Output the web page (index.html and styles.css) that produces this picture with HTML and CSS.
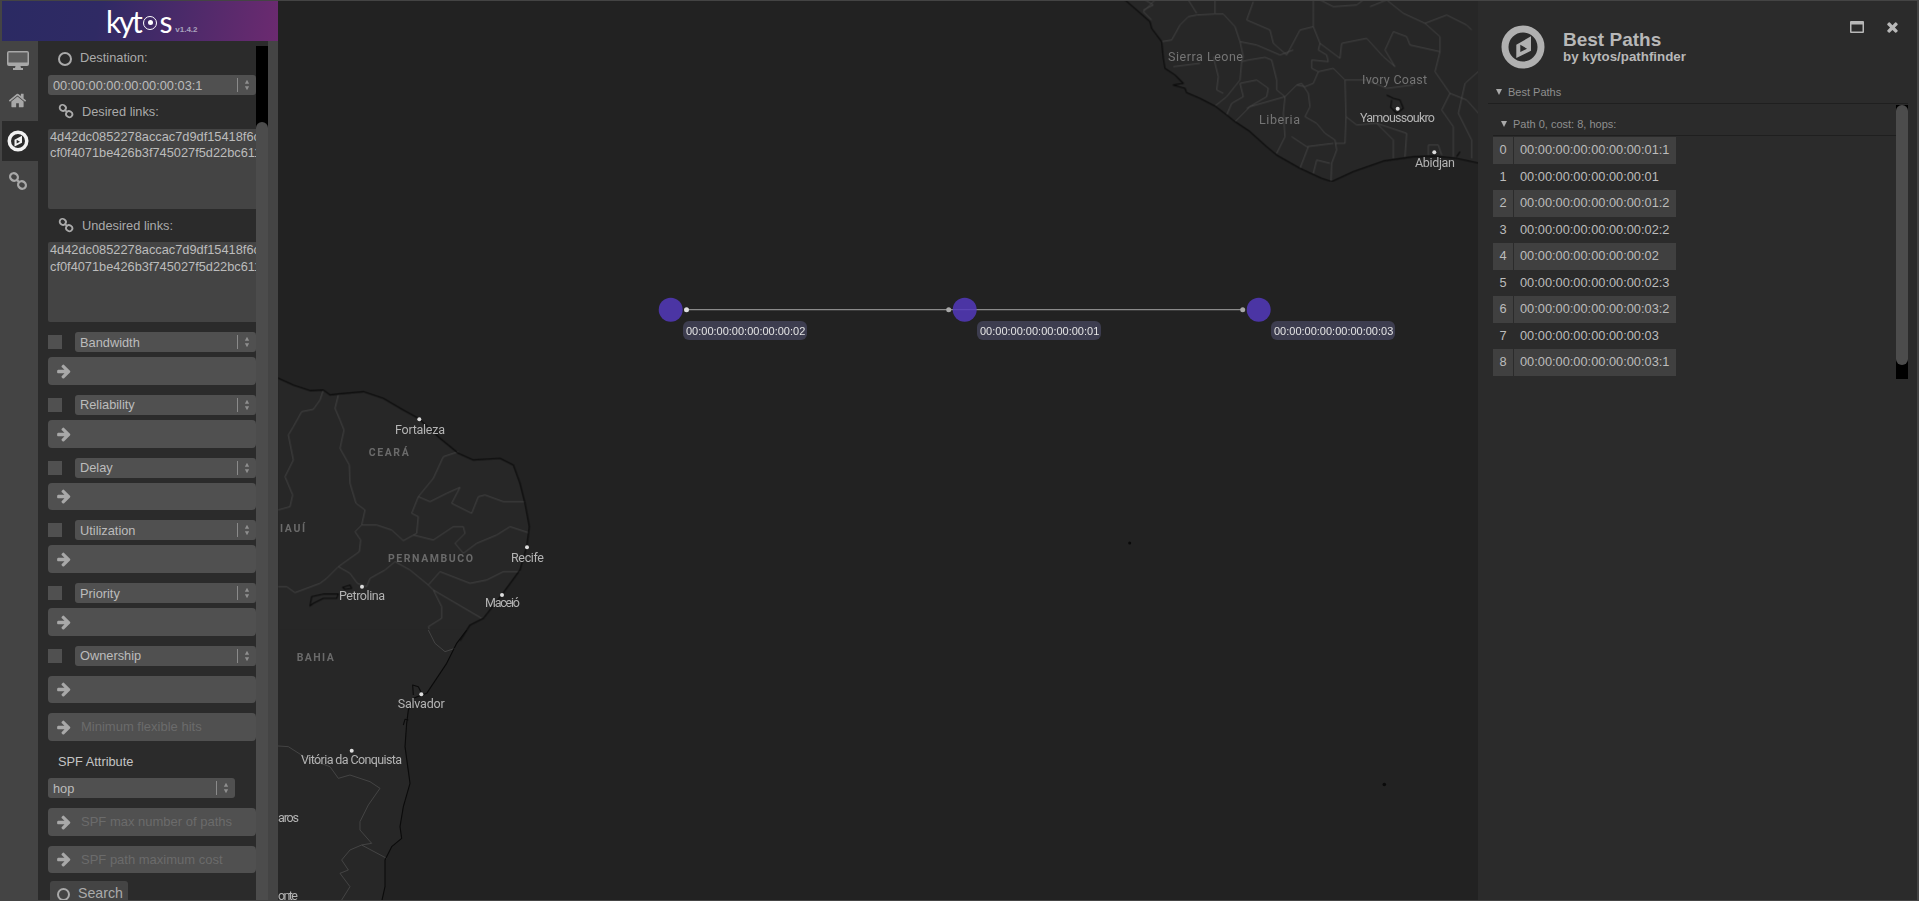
FILE: index.html
```html
<!DOCTYPE html>
<html lang="en">
<head>
<meta charset="utf-8">
<title>Kytos</title>
<link rel="stylesheet" href="styles.css">
</head>
<body>
<svg class="defs" width="0" height="0" aria-hidden="true">
  <symbol id="i-arrow" viewBox="0 0 1792 1792"><path d="M1600 960q0 54-37 91l-651 651q-39 37-91 37-51 0-90-37l-75-75q-38-38-38-91t38-91l293-293h-704q-52 0-84.5-37.5t-32.5-90.5v-128q0-53 32.5-90.5t84.5-37.5h704l-293-294q-38-36-38-90t38-90l75-75q38-38 90-38 53 0 91 38l651 651q37 35 37 90z"/></symbol>
  <symbol id="i-link" viewBox="0 0 20 20"><g fill="none" stroke="currentColor" stroke-width="2.3"><ellipse cx="6" cy="6" rx="4" ry="3.6" transform="rotate(35 6 6)"/><ellipse cx="14" cy="14" rx="4" ry="3.6" transform="rotate(35 14 14)"/><path d="M8.5 8.5l3 3"/></g></symbol>
  <symbol id="i-updown" viewBox="0 0 7 14"><path d="M3.5 1L6 5.5H1zM3.5 13L1 8.500H6z"/></symbol>
</svg>
<div class="app">
  <aside class="left">
    <header class="brand">
      <span class="logo">kyt<span class="logo-o"><span class="logo-dot"></span></span>s</span>
      <span class="version">v1.4.2</span>
    </header>
    <div class="left-body">
      <nav class="rail">
        <a class="rail-item">
          <svg class="ic-desktop" viewBox="0 0 22 19"><path class="fg" d="M2 0h18a2 2 0 0 1 2 2v11a2 2 0 0 1-2 2h-6.500l.5 2h2v2H6v-2h2l.5-2H2a2 2 0 0 1-2-2V2a2 2 0 0 1 2-2z"/><rect class="screen" x="1.500" y="1.500" width="19" height="10"/></svg>
        </a>
        <a class="rail-item">
          <svg class="ic-home" viewBox="0 0 1792 1792"><path d="M1472 992v480q0 26-19 45t-45 19h-384v-384h-256v384h-384q-26 0-45-19t-19-45v-480q0-1 .5-3t.5-3l575-474 575 474q1 2 1 6zm223-69l-62 74q-8 9-21 11h-3q-13 0-21-7l-692-577-692 577q-12 8-24 7-13-2-21-11l-62-74q-8-10-7-23.500t11-21.500l719-599q32-26 76-26t76 26l244 204v-195q0-14 9-23t23-9h192q14 0 23 9t9 23v408l219 182q10 8 11 21.500t-7 23.500z"/></svg>
        </a>
        <a class="rail-item active">
          <svg class="ic-compass-sm" viewBox="-22 -22 44 44"><circle r="17.500" fill="none" stroke="currentColor" stroke-width="7"/><path fill-rule="evenodd" d="M-7-2.500V11L8 3.700V-10.700zM-2.700-2.300V5L4 1.700z"/></svg>
        </a>
        <a class="rail-item"><svg class="ic-link-rail"><use href="#i-link"/></svg></a>
      </nav>
      <div class="form-area">
        <form class="form">
          <div class="label-row dest"><span class="ring"></span><span>Destination:</span></div>
          <div class="sel sel-dest"><span class="sel-text">00:00:00:00:00:00:00:03:1</span><span class="sel-div"></span><svg class="sel-arrows"><use href="#i-updown"/></svg></div>

          <div class="label-row link-label"><svg class="ic-link"><use href="#i-link"/></svg><span>Desired links:</span></div>
          <div class="area"><div>4d42dc0852278accac7d9df15418f6c8</div><div>cf0f4071be426b3f745027f5d22bc611</div></div>

          <div class="label-row link-label"><svg class="ic-link"><use href="#i-link"/></svg><span>Undesired links:</span></div>
          <div class="area area-loose"><div>4d42dc0852278accac7d9df15418f6c8</div><div>cf0f4071be426b3f745027f5d22bc611</div></div>

          <div class="filter first"><span class="check"></span><div class="sel"><span class="sel-text">Bandwidth</span><span class="sel-div"></span><svg class="sel-arrows"><use href="#i-updown"/></svg></div></div>
          <div class="inp"><svg class="ic-arrow"><use href="#i-arrow"/></svg></div>
          <div class="filter"><span class="check"></span><div class="sel"><span class="sel-text">Reliability</span><span class="sel-div"></span><svg class="sel-arrows"><use href="#i-updown"/></svg></div></div>
          <div class="inp"><svg class="ic-arrow"><use href="#i-arrow"/></svg></div>
          <div class="filter"><span class="check"></span><div class="sel"><span class="sel-text">Delay</span><span class="sel-div"></span><svg class="sel-arrows"><use href="#i-updown"/></svg></div></div>
          <div class="inp"><svg class="ic-arrow"><use href="#i-arrow"/></svg></div>
          <div class="filter"><span class="check"></span><div class="sel"><span class="sel-text">Utilization</span><span class="sel-div"></span><svg class="sel-arrows"><use href="#i-updown"/></svg></div></div>
          <div class="inp"><svg class="ic-arrow"><use href="#i-arrow"/></svg></div>
          <div class="filter"><span class="check"></span><div class="sel"><span class="sel-text">Priority</span><span class="sel-div"></span><svg class="sel-arrows"><use href="#i-updown"/></svg></div></div>
          <div class="inp"><svg class="ic-arrow"><use href="#i-arrow"/></svg></div>
          <div class="filter"><span class="check"></span><div class="sel"><span class="sel-text">Ownership</span><span class="sel-div"></span><svg class="sel-arrows"><use href="#i-updown"/></svg></div></div>
          <div class="inp inp-spaced"><svg class="ic-arrow"><use href="#i-arrow"/></svg></div>
          <div class="inp inp-spaced"><svg class="ic-arrow"><use href="#i-arrow"/></svg><span class="ph">Minimum flexible hits</span></div>

          <div class="spf-label">SPF Attribute</div>
          <div class="sel sel-hop"><span class="sel-text">hop</span><span class="sel-div"></span><svg class="sel-arrows"><use href="#i-updown"/></svg></div>
          <div class="inp inp-spaced"><svg class="ic-arrow"><use href="#i-arrow"/></svg><span class="ph">SPF max number of paths</span></div>
          <div class="inp inp-spaced"><svg class="ic-arrow"><use href="#i-arrow"/></svg><span class="ph">SPF path maximum cost</span></div>
          <div class="search"><span class="search-ic"></span><span>Search</span></div>
        </form>
        <div class="vscroll vscroll-left"><div class="vthumb"></div></div>
      </div>
      <div class="strip"></div>
    </div>
  </aside>

  <main class="map">
    <svg class="map-svg" viewBox="278 1 1200 899" width="1200" height="899">
      <g class="basemap">
      <g transform="translate(1100 0) scale(.33333)">
        <path class="land" d="M75 0L110 30L150 65L155 85L185 125L190 175L195 205L225 225L250 250L220 255L255 265L260 278L300 295L345 318L380 345L405 365L450 395L500 440L530 465L600 505L665 535L695 545L760 515L850 483L940 470L1000 468L1070 475L1140 490V0Z"/>
        <path class="border" d="M130 30L160 15L135 0M165 0L130 35L155 60M185 125L215 120L240 75L265 50L290 45L345 42L370 42L405 80L420 125L430 170L425 185L445 180L495 172L515 180L530 240L530 270L555 290L590 255L605 250L625 280L630 320L615 350L650 370L675 400L705 420L710 450L695 490L693 545"/>
        <path class="border" d="M345 318L380 290L420 240L425 185M265 0L290 40M345 0L345 40M640 0L640 40L640 80L660 130L655 150L680 165L685 185L635 180L635 205L655 215L640 250L615 260L590 255M460 5L440 60L510 90L520 130L560 165L600 90L640 80"/>
        <path class="border" d="M420 125L470 135L540 165L580 150M655 215L700 205L735 240L738 350L735 430L705 430M735 240L800 240L860 265L940 255M660 130L720 175L725 130L800 115L850 170L885 200L855 150L880 95L920 110L930 135L1020 155L1005 215L1050 280L1100 300L1140 345M1020 155L1020 110L975 70L1040 45L1100 75L1115 90M1050 280L1025 330L1060 380L1060 470M1140 210L1095 250L1075 340L1115 420L1115 475M738 350L770 375L830 370L880 420L880 475M830 370L920 400L915 470"/>
        <path class="border" d="M380 345L395 310L430 290L420 250L470 240L505 265L500 290L440 325M405 365L450 320L555 290L550 340L555 410L530 460M575 410L620 440L700 430M625 440L600 505M640 520L650 480L690 490M660 0L700 20L770 15L790 0M810 20L860 0L910 40L975 70M340 170L355 230L350 270L370 280M220 200L300 190"/>
        <path class="coast" d="M75 0L110 30L150 65L155 85L185 125L190 175L195 205L225 225L250 250L220 255L255 265L260 278L300 295L345 318L380 345L405 365L450 395L500 440L530 465L600 505L665 535L695 545L760 515L850 483L940 470L1000 468L1070 475L1140 490"/>
        <path class="coast" d="M860 285L880 295L900 300L910 325L890 340L872 322L875 300M1070 470L1080 455"/>
        <path class="border" d="M985 465L985 435L1015 435L1025 465"/>
      </g>
      <g transform="translate(270 370) scale(.33333)">
        <path class="land" d="M24 24L70 45L120 62L160 60L180 75L205 72L280 65L340 85L400 120L445 145L510 205L565 250L610 270L690 265L730 285L750 340L765 400L778 470L770 530L750 600L695 675L640 745L600 765L570 812H24Z"/>
        <path class="border" d="M160 60L150 90L130 118L95 125L70 170L55 195L70 270L45 320L68 375L60 410L24 420M205 75L195 115L210 150L222 180L210 235L238 285L240 340L258 400L285 420L275 465L255 485L272 510L268 545L205 590L170 625L150 640L75 668L50 650L24 650"/>
        <path class="border" d="M275 465L320 465L365 480L400 512L440 490L445 440L425 430L445 380L490 325L520 260L565 245M445 380L480 395L530 370L570 352L545 400L605 430L625 380L645 375L700 395L765 395M430 495L490 510L550 470L580 470L585 490L555 520L580 550L620 520L680 495L720 470L775 488"/>
        <path class="border" d="M205 590L240 610L262 640L290 650L300 625L345 600L375 575L420 600L475 645L510 605L600 640L650 630L700 605L750 605M475 645L490 660L635 745M490 660L515 710L515 745L475 770L490 810"/>
        <path class="coast" d="M24 24L70 45L120 62L160 60L180 75L205 72L280 65L340 85L400 120L445 145L510 205L565 250L610 270L690 265L730 285L750 340L765 400L778 470L770 530L750 600L695 675L640 745L600 765L570 812"/>
        <path class="coast" d="M120 708L125 680L160 672L205 672L200 685L160 685L130 700ZM218 652L240 645L245 655L225 658Z"/>
      </g>
      <g transform="translate(270 630) scale(.33333)">
        <path class="land" d="M590 -2L560 40L530 100L470 190L430 205L415 240L410 280L405 350L420 460L400 530L390 590L395 625L365 650L345 690L345 770L335 815H24V-2Z"/>
        <path class="border" d="M475 0L495 40L525 65L555 55M24 348L55 350L110 385L180 410L205 445L240 435L300 455L330 475L295 525L270 575L270 600L305 640L275 645L240 660L215 690L235 720L210 730L240 770L215 810M275 645L350 685"/>
        <path class="coast" d="M590 0L560 40L530 100L470 190L430 205L415 240L410 280L405 350L420 460L400 530L390 590L395 625L365 650L345 690L345 770L335 815M430 195L428 165L445 170L455 190M400 285L405 268L415 270"/>
      </g>

      <circle class="city" cx="1397.700" cy="108.700" r="2"/>
      <circle class="city" cx="1434.300" cy="152.300" r="2"/>
      <circle class="city" cx="419.300" cy="419.300" r="2"/>
      <circle class="city" cx="527" cy="547.300" r="2"/>
      <circle class="city" cx="362" cy="586.700" r="2"/>
      <circle class="city" cx="502" cy="595" r="2"/>
      <circle class="city" cx="421.300" cy="694.300" r="2"/>
      <circle class="city" cx="351.700" cy="750.700" r="2"/>
      <circle class="speck" cx="1129.700" cy="543" r="1.500"/>
      <circle class="speck" cx="1384.300" cy="784.500" r="1.800"/>

      <text class="m-country" x="1168" y="61" textLength="75">Sierra Leone</text>
      <text class="m-country" x="1259" y="124" textLength="41">Liberia</text>
      <text class="m-country" x="1362" y="84" textLength="65">Ivory Coast</text>
      <text class="m-city" x="1360" y="121.500" textLength="75">Yamoussoukro</text>
      <text class="m-city" x="1415" y="167" textLength="40">Abidjan</text>
      <text class="m-city" x="395" y="433.500" textLength="50">Fortaleza</text>
      <text class="m-state" x="368.700" y="455.500" textLength="40">CEARÁ</text>
      <text class="m-state" x="280" y="532" textLength="25">IAUÍ</text>
      <text class="m-state" x="388" y="562" textLength="85">PERNAMBUCO</text>
      <text class="m-city" x="511" y="561.500" textLength="33">Recife</text>
      <text class="m-city" x="339" y="600" textLength="46">Petrolina</text>
      <text class="m-city" x="485" y="607" textLength="35">Maceió</text>
      <text class="m-state" x="296.700" y="661" textLength="37">BAHIA</text>
      <text class="m-city" x="397.700" y="708" textLength="47">Salvador</text>
      <text class="m-city" x="301" y="764" textLength="101">Vitória da Conquista</text>
      <text class="m-city" x="278" y="821.500" textLength="21">aros</text>
      <text class="m-city" x="278" y="900" textLength="20">onte</text>
      </g>

      <line class="t-link" x1="686.500" y1="309.700" x2="1242.700" y2="309.700"/>
      <circle class="t-node" cx="670.700" cy="309.700" r="12"/>
      <circle class="t-node" cx="964.700" cy="309.700" r="12"/>
      <circle class="t-node" cx="1258.700" cy="309.700" r="12"/>
      <circle class="t-dot-a" cx="686.500" cy="309.700" r="2.500"/>
      <circle class="t-dot-b" cx="948.700" cy="309.700" r="2.500"/>
      <circle class="t-dot-b" cx="1242.700" cy="309.700" r="2.500"/>
      <rect class="t-tag" x="683" y="321" width="124" height="19" rx="6"/>
      <rect class="t-tag" x="977" y="321" width="124" height="19" rx="6"/>
      <rect class="t-tag" x="1271" y="321" width="124" height="19" rx="6"/>
      <text class="t-label" x="686" y="335">00:00:00:00:00:00:00:02</text>
      <text class="t-label" x="980" y="335">00:00:00:00:00:00:00:01</text>
      <text class="t-label" x="1274" y="335">00:00:00:00:00:00:00:03</text>
    </svg>
  </main>

  <aside class="right">
    <div class="win-controls">
      <svg class="ic-max" viewBox="0 0 14 12"><path fill-rule="evenodd" d="M1 0h12a1 1 0 0 1 1 1v10a1 1 0 0 1-1 1H1a1 1 0 0 1-1-1V1a1 1 0 0 1 1-1zM1.500 3.500v7h11v-7z"/></svg>
      <svg class="ic-x" viewBox="280 230 1240 1324"><path d="M1490 1322q0 40-28 68l-136 136q-28 28-68 28t-68-28l-294-294-294 294q-28 28-68 28t-68-28l-136-136q-28-28-28-68t28-68l294-294-294-294q-28-28-28-68t28-68l136-136q28-28 68-28t68 28l294 294 294-294q28-28 68-28t68 28l136 136q28 28 28 68t-28 68l-294 294 294 294q28 28 28 68z"/></svg>
    </div>
    <header class="app-head">
      <svg class="ic-compass" viewBox="-22 -22 44 44"><circle r="18" fill="none" stroke="currentColor" stroke-width="7"/><path fill-rule="evenodd" d="M-6.700-2.300V11L8 3.700V-10.700zM-2.700-2.300V5L4 1.700z"/></svg>
      <div class="app-titles">
        <div class="app-title">Best Paths</div>
        <div class="app-sub">by kytos/pathfinder</div>
      </div>
    </header>
    <div class="section-head"><span class="tri"></span><span>Best Paths</span></div>
    <div class="results">
      <div class="results-main">
        <div class="path-head"><span class="tri"></span><span>Path 0, cost: 8, hops:</span></div>
        <div class="hops">
          <div class="hop"><span>0</span><span>00:00:00:00:00:00:00:01:1</span></div>
          <div class="hop"><span>1</span><span>00:00:00:00:00:00:00:01</span></div>
          <div class="hop"><span>2</span><span>00:00:00:00:00:00:00:01:2</span></div>
          <div class="hop"><span>3</span><span>00:00:00:00:00:00:00:02:2</span></div>
          <div class="hop"><span>4</span><span>00:00:00:00:00:00:00:02</span></div>
          <div class="hop"><span>5</span><span>00:00:00:00:00:00:00:02:3</span></div>
          <div class="hop"><span>6</span><span>00:00:00:00:00:00:00:03:2</span></div>
          <div class="hop"><span>7</span><span>00:00:00:00:00:00:00:03</span></div>
          <div class="hop"><span>8</span><span>00:00:00:00:00:00:00:03:1</span></div>
        </div>
      </div>
      <div class="vscroll vscroll-right"><div class="vthumb"></div></div>
    </div>
  </aside>
</div>
</body>
</html>
```

FILE: styles.css
```css
* { box-sizing: border-box; }
html, body { margin: 0; height: 100%; }
body {
  background: #444;
  font-family: "Liberation Sans", Arial, sans-serif;
  font-size: 12.8px;
  color: #bcbcbc;
  overflow: hidden;
}
.defs { position: absolute; }
.app {
  display: flex;
  height: 901px;
  padding: 1px 2px;
}

/* left panel */
.left { width: 276px; flex: none; display: flex; flex-direction: column; min-height: 0; }
.brand {
  height: 40px;
  flex: none;
  display: flex;
  align-items: flex-start;
  padding-left: 104px;
  background: linear-gradient(100deg, #2b2a63 0%, #2f2a64 35%, #6c2a70 100%);
  color: #fff;
}
.logo {
  display: flex;
  align-items: center;
  height: 40px;
  font-family: Lato, sans-serif;
  font-weight: 400;
  font-size: 30px;
  line-height: 36px;
  letter-spacing: -2.300px;
}
.logo-o {
  width: 14px;
  height: 14px;
  margin: 3px 2.500px 0 2.500px;
  border: 1.500px solid #fff;
  border-radius: 50%;
  display: flex;
  align-items: center;
  justify-content: center;
  flex: none;
}
.logo-dot { width: 5px; height: 5px; border-radius: 50%; background: #fff; }
.version { margin: 24px 0 0 5px; font-size: 8px; font-weight: 700; color: #a9a3bd; }

.left-body { flex: 1; display: flex; min-height: 0; }
.rail { width: 36px; flex: none; background: #444; display: flex; flex-direction: column; }
.rail-item { height: 40px; display: flex; align-items: center; justify-content: center; padding-right: 5px; color: #a8a8a8; fill: #a8a8a8; }
.rail-item.active { background: #2b2b2b; color: #f2f2f2; fill: #f2f2f2; }
.ic-desktop { width: 22px; height: 19px; margin-top: -1px; }
.ic-desktop .fg { fill: #a8a8a8; }
.ic-desktop .screen { fill: #5d5d5d; }
.ic-home { width: 19px; height: 19px; margin-top: -1px; }
.ic-compass-sm { width: 22px; height: 22px; }
.ic-link-rail { width: 20px; height: 20px; color: #a8a8a8; }

.form-area { width: 230px; flex: none; background: #2b2b2b; display: flex; min-height: 0; padding-left: 10px; }
.form { width: 208px; flex: none; overflow: hidden; display: flex; flex-direction: column; }
.strip { flex: 1; background: #444; }

.vscroll { width: 12px; flex: none; background: #000; }
.vthumb { background: #4c4c4c; border-radius: 6px 6px 0 0; }
.vscroll-left { margin-top: 5px; padding-top: 76px; display: flex; }
.vscroll-left .vthumb { flex: 1; }

.label-row { display: flex; align-items: center; color: #aaa; flex: none; }
.dest { height: 21px; margin-top: 6px; padding-left: 10px; }
.ring { width: 14px; height: 14px; border: 2px solid #aaa; border-radius: 50%; margin: 3px 8px 0 0; }
.link-label { height: 18px; margin-top: 7px; padding-left: 10px; }
.ic-link { width: 16px; height: 16px; color: #aaa; margin-right: 8px; }

.sel {
  flex: 1;
  height: 20px;
  min-width: 0;
  display: flex;
  align-items: center;
  background: #505050;
  border-radius: 3px;
  padding-left: 5px;
  color: #bcbcbc;
}
.sel-dest { flex: none; margin-top: 7px; }
.sel-hop { flex: none; width: 187px; margin-top: 7.500px; }
.sel-text { flex: 1; white-space: nowrap; overflow: hidden; }
.sel-div { width: 1px; height: 14px; background: #8a8a8a; flex: none; }
.sel-arrows { width: 6px; height: 12px; fill: #8f8f8f; margin: 0 6px 0 6px; flex: none; }

.area {
  flex: none;
  height: 80px;
  margin-top: 9px;
  background: #444;
  padding-left: 2px;
  border-radius: 2px 0 0 2px;
  line-height: 15.6px;
  white-space: nowrap;
  overflow: hidden;
}
.area-loose { margin-top: 8px; line-height: 17.3px; }
.area-loose div:first-child { margin-top: -1px; }

.filter { flex: none; display: flex; align-items: center; gap: 13px; margin-top: 10px; }
.filter.first { margin-top: 10px; }
.check { width: 14px; height: 14px; background: #505050; flex: none; }

.inp {
  flex: none;
  height: 27.75px;
  margin-top: 5px;
  display: flex;
  align-items: center;
  padding-left: 7.700px;
  background: #505050;
  border-radius: 4px;
}
.inp-spaced { margin-top: 9.750px; }
.ic-arrow { width: 16px; height: 16px; fill: #a8a8a8; flex: none; }
.ph { margin-left: 9.300px; font-size: 13px; color: #6b6b6b; white-space: nowrap; }
.spf-label { flex: none; height: 18px; line-height: 18px; margin-top: 12px; padding-left: 10px; color: #c4c4c4; }

.search {
  flex: none;
  width: 78px;
  height: 24px;
  margin: 8px 0 0 2px;
  padding-left: 7px;
  display: flex;
  align-items: center;
  gap: 8px;
  background: #444;
  border-radius: 3px 3px 0 0;
  font-size: 14.200px;
  color: #aaa;
}
.search-ic { width: 13px; height: 13px; margin-top: 3px; border: 2.500px solid #aaa; border-radius: 50%; flex: none; }

/* map */
.map { flex: 1; min-width: 0; position: relative; background: #222; overflow: hidden; }
.map-svg { position: absolute; left: 0; top: 0; display: block; font-family: Roboto, "Liberation Sans", sans-serif; }
.basemap { filter: blur(.35px); }
.land { fill: #272727; stroke: none; }
.border { fill: none; stroke: #4b4b4b; stroke-width: .8px; vector-effect: non-scaling-stroke; stroke-linejoin: round; }
.coast { fill: none; stroke: #0b0b0b; stroke-width: 1.100px; vector-effect: non-scaling-stroke; stroke-linejoin: round; }
.city { fill: #ddd; }
.speck { fill: #0a0a0a; }
.m-country { font-size: 12.500px; fill: #757575; }
.m-city { font-size: 12.500px; fill: #b4b4b4; }
.m-state { font-size: 10.500px; font-weight: 700; fill: #6a6a6a; }
.t-link { stroke: #8a8a8a; stroke-width: 1.300px; }
.t-node { fill: #5238bb; fill-opacity: .85; }
.t-dot-a { fill: #e0e0e0; }
.t-dot-b { fill: #a8a8a8; }
.t-tag { fill: #3d3d4f; }
.t-label { font-family: "Liberation Sans", Arial, sans-serif; font-size: 11px; fill: #e4e4e4; }

/* right panel */
.right { width: 439px; flex: none; background: #2b2b2b; position: relative; display: flex; flex-direction: column; min-height: 0; }
.win-controls { position: absolute; top: 20px; left: 372px; display: flex; align-items: center; gap: 23px; fill: #b8b8b8; }
.ic-max { width: 14px; height: 12px; display: block; }
.ic-x { width: 11px; height: 12px; display: block; }
.app-head { flex: none; height: 81px; display: flex; align-items: flex-start; padding: 23.500px 0 0 23px; }
.ic-compass { width: 44px; height: 44px; color: #b0b0b0; fill: #b0b0b0; flex: none; }
.app-titles { margin-left: 18px; padding-top: 5px; font-weight: 700; color: #b8b8b8; }
.app-title { font-size: 19px; line-height: 20px; }
.app-sub { font-size: 13.330px; line-height: 14px; margin-top: 0; }
.tri { width: 0; height: 0; border-style: solid; border-width: 6px 3px 0; border-color: #aaa transparent transparent; flex: none; }
.section-head {
  flex: none;
  height: 22px;
  margin: 0 9px 0 10px;
  padding: 0 0 2px 8px;
  display: flex;
  align-items: center;
  gap: 6px;
  font-size: 11px;
  color: #8f8f8f;
  border-bottom: 1px solid #1f1f1f;
}
.results { flex: none; display: flex; margin: 1px 9px 0 15px; }
.results-main { flex: 1; min-width: 0; }
.path-head {
  height: 31px;
  padding: 8px 0 0 8px;
  display: flex;
  align-items: center;
  gap: 6px;
  font-size: 11px;
  color: #8f8f8f;
  border-bottom: 1px solid #1f1f1f;
}
.hops { display: flex; flex-direction: column; margin-top: 1px; }
.hop { height: 26.550px; display: grid; grid-template-columns: 20px 162px; column-gap: 1px; line-height: 26px; }
.hop span:first-child { text-align: center; }
.hop span:last-child { padding-left: 6px; }
.hop:nth-child(odd) span { background: #404040; }
.vscroll-right { height: 274px; }
.vscroll-right .vthumb { height: 260px; border-radius: 6px; }
```
